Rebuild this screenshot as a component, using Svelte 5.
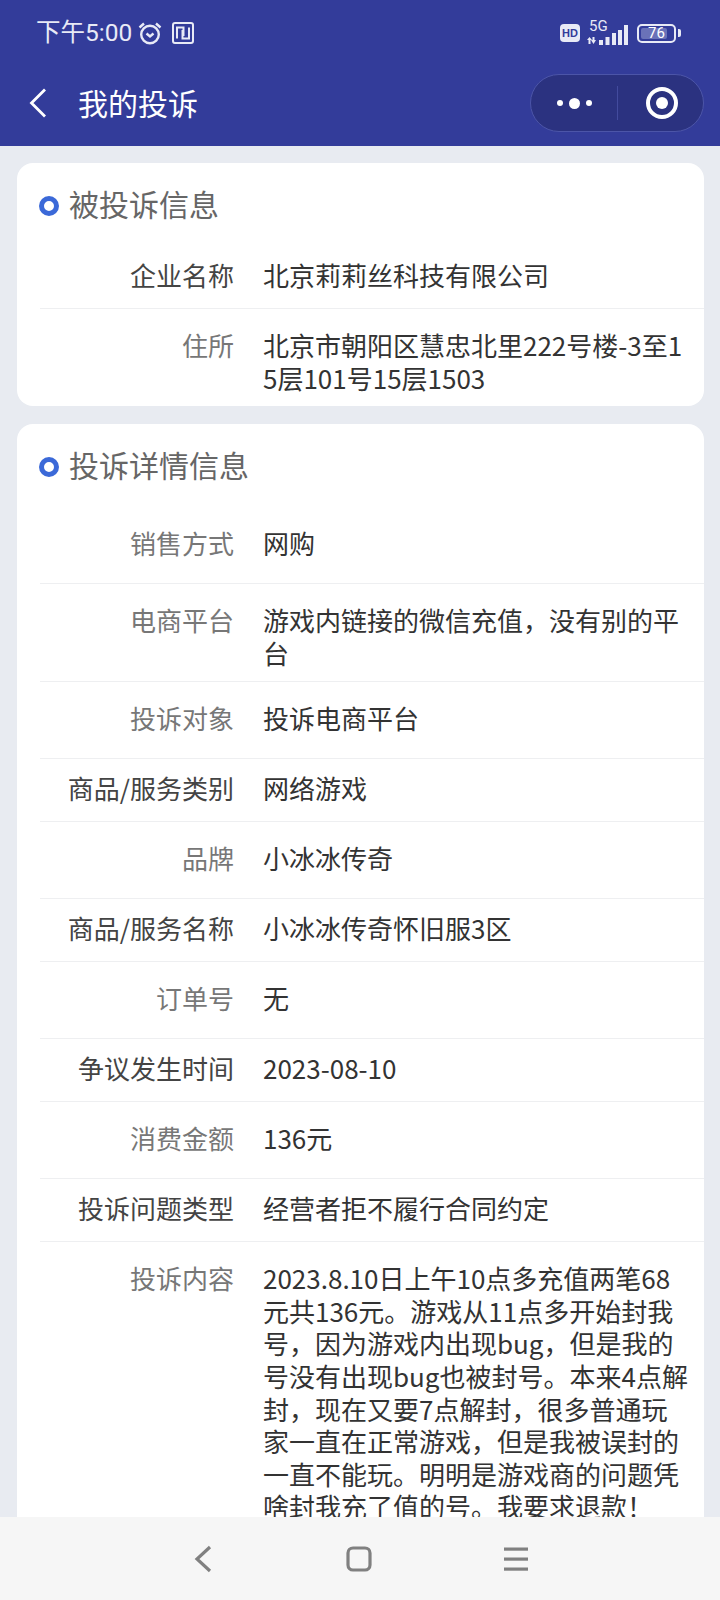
<script>
  const companyRows = [
    { label: '企业名称', value: '北京莉莉丝科技有限公司', dark: true, pad: 'short' },
    { label: '住所', value: '北京市朝阳区慧忠北里222号楼-3至15层101号15层1503', pad: 'wrap' }
  ];

  const detailRows = [
    { label: '销售方式', value: '网购', pad: 'tall' },
    { label: '电商平台', value: '游戏内链接的微信充值，没有别的平台', pad: 'wrap' },
    { label: '投诉对象', value: '投诉电商平台', pad: 'tall' },
    { label: '商品/服务类别', value: '网络游戏', dark: true, pad: 'short' },
    { label: '品牌', value: '小冰冰传奇', pad: 'tall' },
    { label: '商品/服务名称', value: '小冰冰传奇怀旧服3区', dark: true, pad: 'short' },
    { label: '订单号', value: '无', pad: 'tall' },
    { label: '争议发生时间', value: '2023-08-10', dark: true, pad: 'short' },
    { label: '消费金额', value: '136元', pad: 'tall' },
    { label: '投诉问题类型', value: '经营者拒不履行合同约定', dark: true, pad: 'short' },
    {
      label: '投诉内容',
      value: '2023.8.10日上午10点多充值两笔68元共136元。游戏从11点多开始封我号，因为游戏内出现bug，但是我的号没有出现bug也被封号。本来4点解封，现在又要7点解封，很多普通玩家一直在正常游戏，但是我被误封的一直不能玩。明明是游戏商的问题凭啥封我充了值的号。我要求退款！',
      pad: 'tall'
    }
  ];
</script>

<div class="page">
  <header class="top">
    <div class="status">
      <div class="status-left">
        <span class="time">下午5:00</span>
        <svg width="24" height="24" viewBox="0 0 24 24" fill="none" stroke="#e8eaf6" stroke-width="2.400">
          <circle cx="12" cy="13.500" r="8.800" />
          <path d="M8.500 12.500l3.500 3 3.500-3" />
          <path d="M1.500 6.500l4.500-4M22.500 6.500l-4.500-4" />
        </svg>
        <svg width="22" height="22" viewBox="0 0 22 22" fill="none" stroke="#e8eaf6" stroke-width="2">
          <rect x="1" y="1" width="20" height="20" rx="2" />
          <path d="M5 16.500V5.500h6.500v8.500M17 5.500v11h-6.500V8" />
        </svg>
      </div>
      <div class="status-right">
        <span class="hd">HD</span>
        <div class="signal">
          <span class="five-g">5G</span>
          <svg width="42" height="20" viewBox="0 0 42 20" fill="#e8eaf6">
            <path d="M0 15l2.500-3 2.500 3H3.500v4h-2v-4zM5.500 15v-3h2v3H9l-2.500 4-2.500-4z" />
            <rect x="12" y="15" width="4" height="5" />
            <rect x="18.500" y="12" width="4" height="8" />
            <rect x="25" y="8" width="4" height="12" />
            <rect x="31" y="5" width="4" height="15" />
            <rect x="37" y="0" width="4" height="20" />
          </svg>
        </div>
        <div class="battery">
          <span class="battery-fill"></span>
          <span class="battery-num">76</span>
        </div>
        <span class="battery-tip"></span>
      </div>
    </div>

    <nav class="nav">
      <svg class="back" width="22" height="32" viewBox="0 0 22 32" fill="none" stroke="#fff" stroke-width="2.800">
        <path d="M17 2.500L3.500 16 17 29.500" />
      </svg>
      <span class="nav-title">我的投诉</span>
      <div class="capsule">
        <div class="capsule-more">
          <i class="dot"></i><i class="dot big"></i><i class="dot"></i>
        </div>
        <div class="capsule-close"><i class="ring"></i></div>
      </div>
    </nav>
  </header>

  <main class="content">
    <section class="card">
      <h2 class="card-title"><i class="bullet"></i>被投诉信息</h2>
      {#each companyRows as row}
        <div class="row {row.pad}">
          <div class="label" class:dark={row.dark}>{row.label}</div>
          <div class="value">{row.value}</div>
        </div>
      {/each}
    </section>

    <section class="card">
      <h2 class="card-title"><i class="bullet"></i>投诉详情信息</h2>
      {#each detailRows as row}
        <div class="row {row.pad}">
          <div class="label" class:dark={row.dark}>{row.label}</div>
          <div class="value">{row.value}</div>
        </div>
      {/each}
    </section>
  </main>

  <footer class="softkeys">
    <svg width="24" height="28" viewBox="0 0 24 28" fill="none" stroke="#808080" stroke-width="3.200">
      <path d="M19 2L6 14l13 12" />
    </svg>
    <svg width="26" height="26" viewBox="0 0 26 26" fill="none" stroke="#808080" stroke-width="3.200">
      <rect x="2" y="2" width="22" height="22" rx="5" />
    </svg>
    <svg width="26" height="26" viewBox="0 0 26 26" fill="#808080">
      <rect x="1" y="1.500" width="24" height="3.200" />
      <rect x="1" y="11.500" width="24" height="3.200" />
      <rect x="1" y="21.500" width="24" height="3.200" />
    </svg>
  </footer>
</div>

<style>
  :global(body) {
    margin: 0;
    background: #e8ebf1;
  }

  .page {
    width: 720px;
    height: 1600px;
    overflow: hidden;
    position: relative;
    background: #e8ebf1;
    font-family: "Noto Sans CJK SC", "Noto Sans", sans-serif;
  }

  .top {
    height: 146px;
    background: #333c9a;
    color: #fff;
  }

  .status {
    height: 66px;
    display: flex;
    justify-content: space-between;
    align-items: center;
    padding: 0 39px 0 36px;
  }

  .status-left {
    display: flex;
    align-items: center;
    gap: 6px;
    color: #e8eaf6;
  }

  .status-left svg:last-child {
    margin-left: 4px;
  }

  .time {
    font-size: 24.500px;
    line-height: 32px;
    padding-bottom: 1px;
    font-family: Roboto, "Noto Sans CJK SC", sans-serif;
  }

  .status-right {
    display: flex;
    align-items: center;
  }

  .hd {
    width: 20px;
    height: 18px;
    border-radius: 4px;
    background: #e8eaf6;
    color: #333c9a;
    font: 800 11px/18px "Liberation Sans", sans-serif;
    text-align: center;
    margin-right: 7px;
  }

  .signal {
    position: relative;
    width: 42px;
    height: 24px;
    display: flex;
    align-items: flex-end;
    margin-right: 8px;
  }

  .five-g {
    position: absolute;
    left: 2px;
    top: -1px;
    font: 15px/13px Roboto, sans-serif;
    color: #e8eaf6;
  }

  .battery {
    position: relative;
    width: 35px;
    height: 15px;
    border: 2px solid #e8eaf6;
    border-radius: 5px;
    overflow: hidden;
    box-sizing: content-box;
  }

  .battery-fill {
    position: absolute;
    left: 2px;
    top: 2px;
    bottom: 2px;
    width: 26px;
    background: #6a72b8;
    border-radius: 2px;
  }

  .battery-num {
    position: absolute;
    inset: 0;
    text-align: center;
    font: 15px/15px Roboto, sans-serif;
    color: #fff;
  }

  .battery-tip {
    width: 3px;
    height: 8px;
    margin-left: 2px;
    background: #e8eaf6;
    border-radius: 0 2px 2px 0;
  }

  .nav {
    height: 74px;
    display: flex;
    align-items: center;
    padding: 0 16px 0 28px;
  }

  .nav-title {
    margin-left: 28px;
    font-size: 30px;
    line-height: 40px;
    padding-bottom: 2px;
  }

  .capsule {
    margin-left: auto;
    width: 172px;
    height: 56px;
    display: flex;
    align-items: center;
    background: #2b3280;
    border: 1px solid #4c55a8;
    border-radius: 29px;
  }

  .capsule-more {
    width: 86px;
    height: 34px;
    display: flex;
    align-items: center;
    justify-content: center;
    gap: 6px;
    border-right: 1px solid #434b9e;
  }

  .dot {
    width: 6px;
    height: 6px;
    border-radius: 50%;
    background: #fff;
  }

  .dot.big {
    width: 11px;
    height: 11px;
  }

  .capsule-close {
    flex: 1;
    display: flex;
    justify-content: center;
    padding-left: 3px;
  }

  .ring {
    width: 32px;
    height: 32px;
    box-sizing: border-box;
    border-radius: 50%;
    border: 4px solid #fff;
    position: relative;
  }

  .ring::after {
    content: "";
    position: absolute;
    inset: 6px;
    border-radius: 50%;
    background: #fff;
  }

  .content {
    padding: 17px 16px 0 17px;
    display: flex;
    flex-direction: column;
    gap: 18px;
  }

  .card {
    background: #fff;
    border-radius: 16px;
    padding-left: 23px;
  }

  .card-title {
    margin: 0;
    height: 83px;
    box-sizing: border-box;
    padding-bottom: 4px;
    display: flex;
    align-items: center;
    gap: 10px;
    font-size: 30px;
    font-weight: 400;
    color: #666;
  }

  .bullet {
    width: 20px;
    height: 20px;
    margin-top: 7px;
    margin-left: -1px;
    box-sizing: border-box;
    border: 5px solid #3b69d8;
    border-radius: 50%;
  }

  .row {
    display: flex;
    gap: 29px;
    padding-right: 12px;
    font-size: 26px;
    line-height: 32.600px;
    border-top: 1px solid #eeeff1;
  }

  .card-title + .row {
    border-top: 0;
  }

  .row.tall {
    padding-top: 20px;
    padding-bottom: 23.400px;
  }

  .row.short {
    padding-top: 13px;
    padding-bottom: 16.400px;
  }

  .row.wrap {
    padding-top: 20px;
    padding-bottom: 12px;
  }

  .label {
    width: 194px;
    flex: none;
    text-align: right;
    color: #777;
  }

  .label.dark {
    color: #444;
  }

  .value {
    flex: 1;
    min-width: 0;
    color: #333;
    word-break: break-all;
  }

  .softkeys {
    position: absolute;
    left: 0;
    right: 0;
    bottom: 0;
    height: 83px;
    display: flex;
    align-items: center;
    justify-content: center;
    gap: 131px;
    background: #f6f6f6;
    box-sizing: border-box;
  }
</style>
